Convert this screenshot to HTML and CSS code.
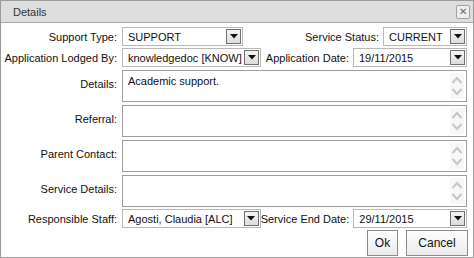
FILE: index.html
```html
<!DOCTYPE html>
<html lang="en">
  <head>
    <meta charset="UTF-8" />
    <title>Details</title>
    <link rel="stylesheet" href="styles.css">
  </head>
  <body>
    <div class="window">
      <div class="title-bar">
        <span class="title">Details</span>
        <span class="close">&#x2715;</span>
      </div>

      <div class="form">
        <div class="row">
          <label class="label">Support Type:</label>
          <div class="combo w-type"><span class="combo-text">SUPPORT</span><span class="combo-btn"></span></div>
          <label class="label label-right">Service Status:</label>
          <div class="combo w-status"><span class="combo-text">CURRENT</span><span class="combo-btn"></span></div>
        </div>

        <div class="row">
          <label class="label">Application Lodged By:</label>
          <div class="combo w-lodged"><span class="combo-text">knowledgedoc [KNOW]</span><span class="combo-btn"></span></div>
          <label class="label label-right">Application Date:</label>
          <div class="combo w-date"><span class="combo-text">19/11/2015</span><span class="combo-btn"></span></div>
        </div>

        <div class="row row-text">
          <label class="label">Details:</label>
          <div class="textbox"><span class="textbox-text">Academic support.</span><span class="spin"></span></div>
        </div>

        <div class="row row-text">
          <label class="label">Referral:</label>
          <div class="textbox"><span class="textbox-text"></span><span class="spin"></span></div>
        </div>

        <div class="row row-text">
          <label class="label">Parent Contact:</label>
          <div class="textbox"><span class="textbox-text"></span><span class="spin"></span></div>
        </div>

        <div class="row row-text">
          <label class="label">Service Details:</label>
          <div class="textbox"><span class="textbox-text"></span><span class="spin"></span></div>
        </div>

        <div class="row">
          <label class="label">Responsible Staff:</label>
          <div class="combo w-staff"><span class="combo-text">Agosti, Claudia [ALC]</span><span class="combo-btn"></span></div>
          <label class="label label-right">Service End Date:</label>
          <div class="combo w-date"><span class="combo-text">29/11/2015</span><span class="combo-btn"></span></div>
        </div>

        <div class="buttons">
          <button class="btn btn-ok">Ok</button>
          <button class="btn btn-cancel">Cancel</button>
        </div>
      </div>
    </div>

    <script>
      // the little up/down chevrons on the right side of each text box
      const chevrons = `
        <svg width="12" height="24" viewBox="0 0 12 24">
          <polyline points="1.5,9 6,4 10.5,9" fill="none" stroke="#c6c6c6" stroke-width="2" />
          <polyline points="1.5,15 6,20 10.5,15" fill="none" stroke="#c6c6c6" stroke-width="2" />
        </svg>`;
      document.querySelectorAll('.spin').forEach((el) => {
        el.innerHTML = chevrons;
      });

      const arrow = `
        <svg width="8" height="5" viewBox="0 0 8 5">
          <polygon points="0,0 8,0 4,4.5" fill="#111" />
        </svg>`;
      document.querySelectorAll('.combo-btn').forEach((el) => {
        el.innerHTML = arrow;
      });
    </script>
  </body>
</html>
```

FILE: styles.css
```css
body {
  margin: 0;
  font-family: "Liberation Sans", Arial, sans-serif;
  font-size: 11px;
  color: #111;
  background-color: #fff;
}

.window {
  width: 474px;
  height: 258px;
  box-sizing: border-box;
  border: 1px solid #9a9a9a;
  background-color: #fff;
}

.title-bar {
  height: 21px;
  display: flex;
  align-items: center;
  justify-content: space-between;
  padding: 0 3px 0 12px;
  background-color: #dedede;
  border-bottom: 1px solid #a8a8a8;
}

.title {
  font-size: 11px;
  color: #333;
}

.close {
  width: 12px;
  height: 12px;
  display: flex;
  align-items: center;
  justify-content: center;
  border: 1px solid #a0a0a0;
  border-radius: 2px;
  background-color: #eee;
  color: #666;
  font-size: 10px;
}

.form {
  padding: 4px 6px 0 3px;
  display: flex;
  flex-direction: column;
}

.row {
  display: flex;
  align-items: center;
  height: 19px;
  margin-bottom: 2px;
}

.row-text {
  align-items: flex-start;
  height: 32px;
  margin-bottom: 2px;
  margin-top: 1px;
}

.row-text .label {
  padding-top: 8px;
}

.label {
  width: 113px;
  flex-shrink: 0;
  text-align: right;
  margin-right: 5px;
  white-space: nowrap;
}

.label-right {
  width: auto;
  flex: 1;
  margin-right: 4px;
}

.combo {
  display: flex;
  align-items: center;
  height: 19px;
  box-sizing: border-box;
  border: 1px solid #b8b8b8;
  background-color: #fff;
}

.combo-text {
  flex: 1;
  padding-left: 5px;
  white-space: nowrap;
  overflow: hidden;
}

.combo-btn {
  width: 15px;
  height: 15px;
  margin-right: 1px;
  display: flex;
  align-items: center;
  justify-content: center;
  border: 1px solid #707070;
  background: linear-gradient(#f4f4f4, #dcdcdc);
  box-sizing: border-box;
}

.w-type {
  width: 121px;
}

.w-status {
  width: 84px;
}

.w-lodged {
  width: 139px;
}

.w-staff {
  width: 139px;
}

.w-date {
  width: 114px;
}

.textbox {
  flex: 1;
  height: 32px;
  box-sizing: border-box;
  border: 1px solid #9d9d9d;
  display: flex;
  justify-content: space-between;
}

.textbox-text {
  padding: 4px 0 0 5px;
}

.spin {
  width: 14px;
  margin: 2px 2px 2px 0;
  display: flex;
  align-items: center;
  justify-content: center;
  background-color: #f7f7f7;
}

.buttons {
  display: flex;
  justify-content: flex-end;
  gap: 8px;
  margin-top: 0;
  margin-right: -1px;
}

.btn {
  height: 26px;
  padding: 0;
  font-family: "Liberation Sans", Arial, sans-serif;
  font-size: 12px;
  color: #111;
  border: 1px solid #8c8c8c;
  background: linear-gradient(#fdfdfd, #ececec);
}

.btn-ok {
  width: 31px;
}

.btn-cancel {
  width: 62px;
}
```
